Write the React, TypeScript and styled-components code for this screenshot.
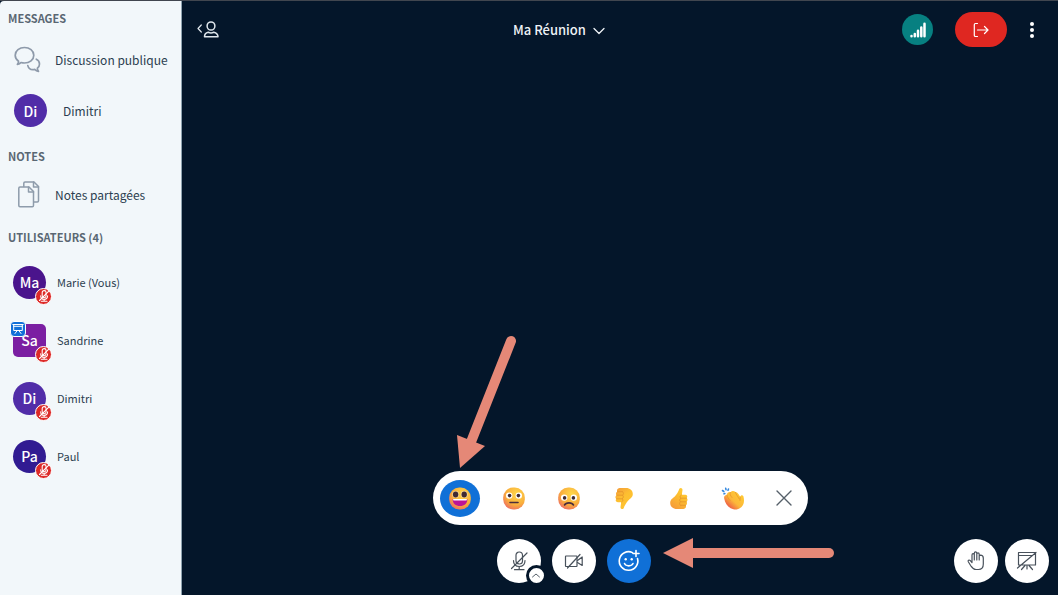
import React from "react";
import styled, { createGlobalStyle } from "styled-components";

const Global = createGlobalStyle`
  *, *::before, *::after { box-sizing: border-box; }
  html, body, #root { height: 100%; }
  body {
    margin: 0;
    background: #04162a;
    font-family: "Noto Sans CJK JP", "Noto Sans", sans-serif;
  }
  button { font-family: inherit; padding: 0; border: 0; background: none; cursor: pointer; }
  svg { display: block; flex: none; }
`;

const Layout = styled.div`
  display: flex;
  min-height: 100vh;
  border-top: 1px solid #41464f;
`;

const Sidebar = styled.aside`
  flex: none;
  width: 182px;
  padding-top: 7px;
  background: #f2f7fa;
  border-right: 1px solid #8fa3b0;
  border-top-left-radius: 4px;
`;

const Section = styled.section`
  margin-bottom: 10px;
`;

const SectionTitle = styled.h2`
  margin: 0 0 6px;
  padding-left: 8px;
  font-size: 11px;
  line-height: 20px;
  font-weight: 700;
  color: #5a6773;
`;

const List = styled.ul`
  margin: 0;
  padding: 0;
  list-style: none;
`;

const Row = styled.button<{ $height: number; $pad: number; $gap: number; $size: number }>`
  display: flex;
  align-items: center;
  width: 100%;
  height: ${(p) => p.$height}px;
  padding-left: ${(p) => p.$pad}px;
  gap: ${(p) => p.$gap}px;
  font-size: ${(p) => p.$size}px;
  line-height: 20px;
  color: #2c3e50;
  text-align: left;
  white-space: nowrap;
`;

const Avatar = styled.span<{ $color: string; $square?: boolean }>`
  position: relative;
  flex: none;
  display: flex;
  align-items: center;
  justify-content: center;
  width: 33px;
  height: 33px;
  border-radius: ${(p) => (p.$square ? "5px" : "50%")};
  background: ${(p) => p.$color};
  color: #fff;
  font-size: 14px;
  line-height: 20px;
  font-weight: 500;
`;

const MutedBadge = styled.span`
  position: absolute;
  right: -6px;
  bottom: -6px;
  display: flex;
  align-items: center;
  justify-content: center;
  width: 17px;
  height: 17px;
  border: 1px solid #fff;
  border-radius: 50%;
  background: #dd2a28;
`;

const PresenterBadge = styled.span`
  position: absolute;
  left: -3px;
  top: -3px;
  display: flex;
  align-items: center;
  justify-content: center;
  width: 16px;
  height: 16px;
  border: 1px solid #fff;
  border-radius: 4px;
  background: #1270d8;
`;

const Main = styled.main`
  flex: 1;
  min-width: 0;
  display: flex;
  flex-direction: column;
  background: #04162a;
`;

const Header = styled.header`
  display: flex;
  align-items: center;
  height: 57px;
  padding: 0 23px 0 15px;
`;

const PlainButton = styled.button`
  display: flex;
  align-items: center;
  justify-content: center;
  color: #fff;
`;

const TitleArea = styled.div`
  flex: 1;
  display: flex;
  justify-content: center;
  padding-right: 3px;
`;

const MeetingTitle = styled.button`
  display: flex;
  align-items: center;
  gap: 7px;
  color: #eef2f6;
  font-size: 13px;
  line-height: 20px;
  font-weight: 500;
`;

const HeaderTools = styled.div`
  display: flex;
  align-items: center;
  gap: 22px;
`;

const SignalButton = styled(PlainButton)`
  width: 31px;
  height: 31px;
  border-radius: 50%;
  background: #078081;
`;

const LeaveButton = styled(PlainButton)`
  width: 52px;
  height: 35px;
  border-radius: 18px;
  background: #df2721;
`;

const Stage = styled.div`
  flex: 1;
`;

const ReactionRow = styled.div`
  display: flex;
  justify-content: center;
  margin-bottom: 14px;
`;

const ReactionBar = styled.div`
  position: relative;
  display: flex;
  align-items: center;
  gap: 10px;
  width: 375px;
  height: 54px;
  padding: 0 4px 0 7px;
  border-radius: 27px;
  background: #fff;
`;

const Reactions = styled.div`
  flex: 1;
  display: flex;
  justify-content: space-between;
`;

const ReactionButton = styled.button<{ $active?: boolean }>`
  display: flex;
  align-items: center;
  justify-content: center;
  width: 40px;
  height: 37px;
  border-radius: 50%;
  background: ${(p) => (p.$active ? "#1070d7" : "transparent")};
`;

const Footer = styled.footer`
  display: flex;
  padding: 0 9px 12px 11px;
`;

const FooterCenter = styled.div`
  flex: 1;
  display: flex;
  justify-content: center;
`;

const ButtonGroup = styled.div<{ $gap: number }>`
  position: relative;
  display: flex;
  gap: ${(p) => p.$gap}px;
`;

const ControlSlot = styled.div`
  position: relative;
`;

const RoundButton = styled.button<{ $active?: boolean }>`
  display: flex;
  align-items: center;
  justify-content: center;
  width: 44px;
  height: 44px;
  border-radius: 50%;
  background: ${(p) => (p.$active ? "#1070d7" : "#fff")};
  color: ${(p) => (p.$active ? "#fff" : "#48515b")};
`;

const DeviceMenuButton = styled.button`
  position: absolute;
  right: -6px;
  bottom: -3px;
  display: flex;
  align-items: center;
  justify-content: center;
  width: 21px;
  height: 21px;
  border: 3px solid #04162a;
  border-radius: 50%;
  background: #fff;
  color: #56606a;
`;

const DownArrow = styled.svg`
  position: absolute;
  left: 20px;
  bottom: 100%;
  pointer-events: none;
`;

const LeftArrow = styled.svg`
  position: absolute;
  left: 100%;
  top: -3px;
  margin-left: 10px;
  pointer-events: none;
`;

const stroke = {
  fill: "none",
  stroke: "currentColor",
  strokeLinecap: "round" as const,
  strokeLinejoin: "round" as const,
};

const ChatIcon = () => (
  <svg width="27" height="28" viewBox="0 0 27 28" {...stroke} stroke="#8e9aaa" strokeWidth="1.700">
    <path d="M4.500 15.200C2.500 13.700 1.200 11.600 1.200 9.200C1.200 4.700 5.500 1.500 10.500 1.500S19.800 4.700 19.800 9.200S15.500 17 10.500 17C9.200 17 8 16.800 7 16.500C6.100 17.600 4.800 18.200 3.400 18.400C4.300 17.400 4.700 16.400 4.500 15.200Z" />
    <path d="M22.300 13.200C24.300 14.100 25.500 15.900 25.500 18C25.500 19.700 24.700 21.200 23.400 22.200C23.300 23.400 23.700 24.400 24.500 25.300C23 25.200 21.700 24.500 20.900 23.400C17.500 24.100 14.600 22.600 13.800 19.600" />
  </svg>
);

const NotesIcon = () => (
  <svg width="22" height="27" viewBox="0 0 22 27" {...stroke} stroke="#8e9cab" strokeWidth="1.500">
    <path d="M2 6H11L15.500 10.500V24.500Q15.500 25.700 14.300 25.700H2Q.8 25.700 .8 24.500V7.200Q.8 6 2 6Z" />
    <path d="M10.500 6V10.900H15.500" />
    <path d="M5.800 5.500V2.200Q5.800 1 7 1H16L20.500 5.500V19.800Q20.500 21 19.300 21H16" />
    <path d="M15.500 1V6H20.500" />
  </svg>
);

const MicOff = ({ size, width }: { size: number; width: number }) => (
  <svg width={size} height={size} viewBox="0 0 20 20" {...stroke} strokeWidth={width}>
    <rect x="7" y="1" width="6.500" height="12" rx="3.250" />
    <path d="M4.500 9.500C4.500 13.500 7 15.500 10.200 15.500S16 13.500 16 9.500M10.200 15.500V18.500M5.500 18.700H15" />
    <path d="M2.500 17.500L18 2" />
  </svg>
);

const PresentationIcon = () => (
  <svg width="12" height="12" viewBox="0 0 12 12" {...stroke} stroke="#fff" strokeWidth="1">
    <path d="M.8 1.500H11.200M1.700 1.500V7.500H10.300V1.500M1.700 3.300H10.300M5 7.800L3 10.500M7 7.800L9 10.500" />
  </svg>
);

const UsersToggleIcon = () => (
  <svg width="22" height="18" viewBox="0 0 22 18" {...stroke} stroke="#dfe6ec" strokeWidth="1.500">
    <path d="M4.300 4L1 7.500L4.300 11" strokeWidth="1.200" />
    <ellipse cx="14" cy="5" rx="3.900" ry="4.100" />
    <path d="M7.500 15.800C7.500 13 9 11.700 11.200 11.200C13 12.200 15 12.200 16.800 11.200C19 11.700 21 13 21 15.800Z" />
  </svg>
);

const ChevronDown = () => (
  <svg width="12" height="10" viewBox="0 0 12 10" {...stroke} strokeWidth="1.300">
    <path d="M1 3.500L6 8.500L11 3.500" />
  </svg>
);

const SignalIcon = () => (
  <svg width="16" height="16" viewBox="0 0 16 16" {...stroke} stroke="#fff" strokeWidth="2.500">
    <path d="M1.500 14.200V13.900M4.800 14.200V12M8 14.200V8.800M11.300 14.200V5.500M14.500 14.200V1.800" />
  </svg>
);

const LeaveIcon = () => (
  <svg width="16" height="15" viewBox="0 0 16 15" {...stroke} strokeWidth="1.200">
    <path d="M4.500 1.500H2.500Q1.300 1.500 1.300 2.700V13.300Q1.300 14.500 2.500 14.500H4.500M4.500 8H15M11.500 4.500L15 8L11.500 11.500" />
  </svg>
);

const DotsIcon = () => (
  <svg width="6" height="18" viewBox="0 0 6 18" fill="#fff">
    <circle cx="3" cy="3" r="2" />
    <circle cx="3" cy="9" r="2" />
    <circle cx="3" cy="15" r="2" />
  </svg>
);

const CloseIcon = () => (
  <svg width="16" height="16" viewBox="0 0 16 16" {...stroke} stroke="#555f69" strokeWidth="1.400">
    <path d="M1 1L15 15M15 1L1 15" />
  </svg>
);

const CameraOff = () => (
  <svg width="20" height="16" viewBox="0 0 20 16" {...stroke} strokeWidth="1.200">
    <rect x="1.500" y="3" width="11.500" height="10.500" rx="0.500" />
    <path d="M13.500 7.500L18.200 4V12.500L13.500 9.500M3.500 15L16 1.500" />
  </svg>
);

const SmileyPlus = () => (
  <svg width="24" height="24" viewBox="0 0 24 24" {...stroke} strokeWidth="1.600">
    <path d="M15.500 3.600A9.300 9.300 0 1 0 20.500 9.500" />
    <path d="M19 1.500V7.500M16 4.500H22" />
    <path d="M7.500 14.500C9 17.600 14.500 17.600 16 14.500" />
    <circle cx="8.700" cy="10.300" r="1.200" fill="#fff" stroke="none" />
    <circle cx="14.700" cy="10.300" r="1.200" fill="#fff" stroke="none" />
  </svg>
);

const HandIcon = () => (
  <svg width="18" height="20" viewBox="0 0 18 20" {...stroke} strokeWidth="1.200">
    <path d="M5 11V4Q5 2.600 6.100 2.600T7.300 4V9M7.300 8V2.200Q7.300 .9 8.500 .9T9.800 2.200V9M9.800 8V3.200Q9.800 1.900 11 1.900T12.200 3.200V9M12.200 8V5.300Q12.200 4.100 13.400 4.100Q16.300 4.200 16.300 7V13Q16.300 18.500 11.500 18.500H9C6 18.500 5 16.500 3.600 14.500L1.300 10.800C.6 9.500 2 8.500 3.100 9.400L5 11.500" />
  </svg>
);

const PresentationOff = () => (
  <svg width="22" height="20" viewBox="0 0 22 20" {...stroke} strokeWidth="1.200">
    <path d="M2.500 1.500H19.500V14H2.500ZM2.500 4.500H16M1.500 17L20 1.500M9 14.500L5.500 18.500M13 14.500L16.500 18.500M11 14.500V18" />
  </svg>
);

const Face = ({ id, children }: { id: string; children: React.ReactNode }) => (
  <svg width="24" height="24" viewBox="0 0 24 24">
    <defs>
      <radialGradient id={id} cx="0.62" cy="0.3" r="0.75">
        <stop offset="0" stopColor="#ffd84a" />
        <stop offset="0.65" stopColor="#f9ae3c" />
        <stop offset="1" stopColor="#ee7160" />
      </radialGradient>
    </defs>
    <rect x="1.200" y="1.600" width="21.600" height="21.800" rx="10" fill={`url(#${id})`} />
    {children}
  </svg>
);

const HappyFace = () => (
  <Face id="happy">
    <ellipse cx="7.600" cy="8.400" rx="3.400" ry="3.400" fill="#f7d9a0" />
    <ellipse cx="16.200" cy="8.400" rx="3.400" ry="3.400" fill="#f7d9a0" />
    <ellipse cx="7.600" cy="8.500" rx="2.700" ry="2.900" fill="#402a32" />
    <ellipse cx="16.200" cy="8.500" rx="2.700" ry="2.900" fill="#402a32" />
    <path d="M4.600 13H19.400C19.400 17.600 16.400 20 12 20S4.600 17.600 4.600 13Z" fill="#bd1597" />
    <path d="M5 13H19L18.500 14.600H5.500Z" fill="#fff" />
  </Face>
);

const NeutralFace = () => (
  <Face id="neutral">
    <circle cx="7.200" cy="9.600" r="3.200" fill="#fff" />
    <circle cx="16.800" cy="9.600" r="3.200" fill="#fff" />
    <circle cx="7.600" cy="9.600" r="1.800" fill="#3d2a33" />
    <circle cx="16.400" cy="9.600" r="1.800" fill="#3d2a33" />
    <path d="M8 16.500H16" stroke="#4b2d3d" strokeWidth="1.600" strokeLinecap="round" />
  </Face>
);

const SadFace = () => (
  <Face id="sad">
    <circle cx="7.200" cy="11.600" r="3.200" fill="#fff" />
    <circle cx="16.800" cy="11.600" r="3.200" fill="#fff" />
    <circle cx="7.600" cy="11.900" r="1.800" fill="#3d2a33" />
    <circle cx="16.400" cy="11.900" r="1.800" fill="#3d2a33" />
    <path d="M7.500 19C9 16.200 15 16.200 16.500 19" fill="none" stroke="#4b2d3d" strokeWidth="1.600" strokeLinecap="round" />
  </Face>
);

const Thumb = ({ id, down }: { id: string; down?: boolean }) => (
  <svg width="20" height="24" viewBox="0 0 20 24">
    <defs>
      <linearGradient id={id} x1="0.800" y1={down ? "1" : "0"} x2="0.200" y2={down ? "0" : "1"}>
        <stop offset="0" stopColor={down ? "#f5a03a" : "#ffcc35"} />
        <stop offset="0.400" stopColor="#fdbf30" />
        <stop offset="1" stopColor={down ? "#ffc533" : "#f59a3a"} />
      </linearGradient>
    </defs>
    <g transform={down ? "rotate(180 10 12.500)" : undefined}>
      <path d="M10.300 2.700C11.500 1.100 13.600 2 13.500 4L12.800 8.800H16.200C18.300 8.800 18.900 11 17.700 12C19 13 18.700 15.100 17.500 15.700C18.500 16.800 18 18.800 16.800 19.200C17.500 21 16.500 22.800 14.500 23H8C4 23 1.200 20.500 1.200 17C1.200 13.500 4 12.300 5.500 10.800C7.500 8.800 9.700 5.100 10.300 2.700Z" fill={`url(#${id})`} />
      <path d="M12 12.200H17.500M11.500 15.800H17.300M11.500 19.300H16.600M12.300 9C10.500 10 10.600 11.800 12 12.200C10.300 13 10.300 15 11.500 15.800C10.200 16.800 10.300 18.500 11.500 19.300" fill="none" stroke="#e4942a" strokeWidth="0.800" strokeLinecap="round" />
    </g>
  </svg>
);

const Clap = () => (
  <svg width="24" height="24" viewBox="0 0 24 24">
    <defs>
      <linearGradient id="clap" x1="0.900" y1="0.200" x2="0.200" y2="0.900">
        <stop offset="0" stopColor="#ffc933" />
        <stop offset="0.550" stopColor="#fcb83a" />
        <stop offset="1" stopColor="#ec5546" />
      </linearGradient>
    </defs>
    <path d="M3.200 12.500C2.600 10.500 4 9 5.800 8.800C6.200 6.800 7.800 5.700 9.500 6.200C10.800 4.600 13 4.600 14.300 6C15.800 6 16.800 7 17.600 8.300L19.200 10.800C19.600 9 21.600 8.500 22.400 10.200C23.200 13 23.400 16.500 22 19C20 22.600 16.500 24 12.500 23.300C8.500 22.500 5.500 19.500 4 15.500Z" fill="url(#clap)" />
    <path d="M9.500 6.500C8.500 8 9.300 9.500 11 11.500M14.300 6.300C15 8.500 17 10.500 18.300 13M19.200 11L19 14.500M6 9.200C6.300 11 7.500 12.800 9 14.500" fill="none" stroke="#e8962b" strokeWidth="0.800" strokeLinecap="round" />
    <path d="M1.500 4.500L2.800 5.500M4.700 2.300L5 3.700M7.500 3L7 4.200M3 7.800L3.800 7.500" stroke="#3488de" strokeWidth="1.600" strokeLinecap="round" />
  </svg>
);

const users = [
  { initials: "Ma", name: "Marie (Vous)", color: "#4a148c" },
  { initials: "Sa", name: "Sandrine", color: "#7b1fa2", presenter: true },
  { initials: "Di", name: "Dimitri", color: "#512da8" },
  { initials: "Pa", name: "Paul", color: "#311b92" },
];

const reactions = [
  { label: "Heureux", icon: <HappyFace />, active: true },
  { label: "Neutre", icon: <NeutralFace /> },
  { label: "Triste", icon: <SadFace /> },
  { label: "Pouce baissé", icon: <Thumb id="thumb-down" down /> },
  { label: "Pouce levé", icon: <Thumb id="thumb-up" /> },
  { label: "Applaudir", icon: <Clap /> },
];

export default function App() {
  return (
    <>
      <Global />
      <Layout>
        <Sidebar>
          <Section>
            <SectionTitle>MESSAGES</SectionTitle>
            <List>
              <li>
                <Row $height={51} $pad={14} $gap={14} $size={12}>
                  <ChatIcon />
                  Discussion publique
                </Row>
              </li>
              <li>
                <Row $height={51} $pad={14} $gap={16} $size={12}>
                  <Avatar $color="#512da8">Di</Avatar>
                  Dimitri
                </Row>
              </li>
            </List>
          </Section>
          <Section>
            <SectionTitle>NOTES</SectionTitle>
            <Row $height={45} $pad={18} $gap={15} $size={12}>
              <NotesIcon />
              Notes partagées
            </Row>
          </Section>
          <Section>
            <SectionTitle>UTILISATEURS (4)</SectionTitle>
            <List>
              {users.map((u) => (
                <li key={u.name}>
                  <Row $height={58} $pad={13} $gap={11} $size={11}>
                    <Avatar $color={u.color} $square={u.presenter}>
                      {u.initials}
                      {u.presenter && (
                        <PresenterBadge>
                          <PresentationIcon />
                        </PresenterBadge>
                      )}
                      <MutedBadge>
                        <MicOff size={12} width={1.8} />
                      </MutedBadge>
                    </Avatar>
                    {u.name}
                  </Row>
                </li>
              ))}
            </List>
          </Section>
        </Sidebar>
        <Main>
          <Header>
            <PlainButton aria-label="Liste des utilisateurs">
              <UsersToggleIcon />
            </PlainButton>
            <TitleArea>
              <MeetingTitle>
                Ma Réunion
                <ChevronDown />
              </MeetingTitle>
            </TitleArea>
            <HeaderTools>
              <SignalButton aria-label="État de la connexion">
                <SignalIcon />
              </SignalButton>
              <LeaveButton aria-label="Quitter">
                <LeaveIcon />
              </LeaveButton>
              <PlainButton aria-label="Options">
                <DotsIcon />
              </PlainButton>
            </HeaderTools>
          </Header>
          <Stage />
          <ReactionRow>
            <ReactionBar>
              <Reactions>
                {reactions.map((r) => (
                  <ReactionButton key={r.label} aria-label={r.label} $active={r.active}>
                    {r.icon}
                  </ReactionButton>
                ))}
              </Reactions>
              <ReactionButton aria-label="Fermer">
                <CloseIcon />
              </ReactionButton>
              <DownArrow width="70" height="140" viewBox="0 0 70 140" aria-hidden="true">
                <path d="M58 10L18 111" stroke="#e58877" strokeWidth="10" strokeLinecap="round" />
                <path d="M7 137L4 104L32 115Z" fill="#e58877" />
              </DownArrow>
            </ReactionBar>
          </ReactionRow>
          <Footer>
            <FooterCenter>
              <ButtonGroup $gap={11}>
                <ControlSlot>
                  <RoundButton aria-label="Activer le micro">
                    <MicOff size={20} width={1.2} />
                  </RoundButton>
                  <DeviceMenuButton aria-label="Changer de micro">
                    <svg width="8" height="5" viewBox="0 0 8 5" {...stroke} strokeWidth="1">
                      <path d="M.5 4L4 1L7.500 4" />
                    </svg>
                  </DeviceMenuButton>
                </ControlSlot>
                <RoundButton aria-label="Partager la webcam">
                  <CameraOff />
                </RoundButton>
                <RoundButton aria-label="Réactions" $active>
                  <SmileyPlus />
                </RoundButton>
                <LeftArrow width="176" height="34" viewBox="0 0 176 34" aria-hidden="true">
                  <path d="M30 17H168" stroke="#e58877" strokeWidth="10" strokeLinecap="round" />
                  <path d="M2 17L32 2V32Z" fill="#e58877" />
                </LeftArrow>
              </ButtonGroup>
            </FooterCenter>
            <ButtonGroup $gap={7}>
              <RoundButton aria-label="Lever la main">
                <HandIcon />
              </RoundButton>
              <RoundButton aria-label="Restaurer la présentation">
                <PresentationOff />
              </RoundButton>
            </ButtonGroup>
          </Footer>
        </Main>
      </Layout>
    </>
  );
}
